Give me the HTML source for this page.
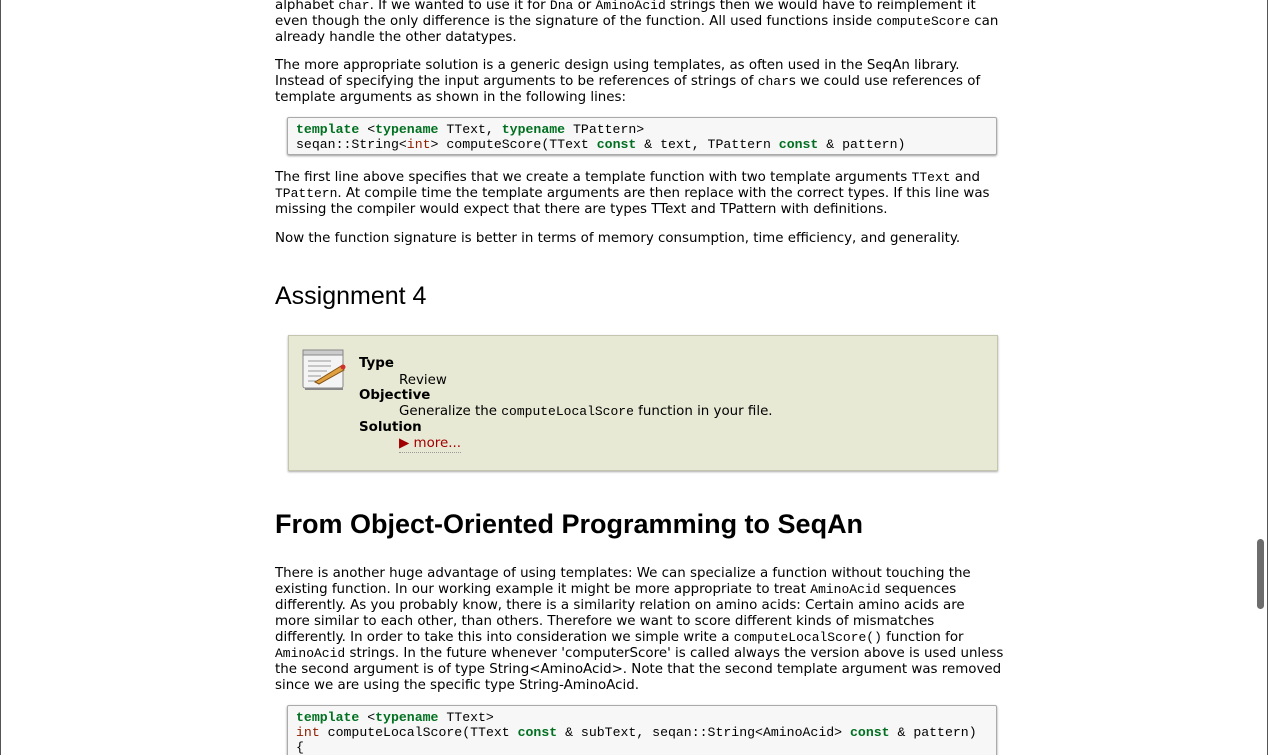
<!DOCTYPE html>
<html><head><meta charset="utf-8"><style>
html,body{margin:0;padding:0;background:#fff;width:1268px;height:755px;overflow:hidden;position:relative}
body{font-family:"DejaVu Sans","Liberation Sans",sans-serif;font-size:13.4px;color:#000}
.b{position:absolute;left:275px;width:737px;line-height:16px}
p{margin:0}
tt,.c{font-family:"Liberation Mono","DejaVu Sans Mono",monospace;font-size:13px;line-height:1}
.code{position:absolute;left:287px;width:710px;background:#f7f7f7;border:1px solid #aaa;border-radius:2px;box-shadow:0 1px 2px #999;font-family:"Liberation Mono",monospace;font-size:13.2px;line-height:15px;padding:4px 8px;box-sizing:border-box;white-space:pre;color:#000;overflow:hidden}
.k{color:#007020;font-weight:bold}.t{color:#902000}
h2{position:absolute;left:275px;margin:0;font-weight:normal;font-size:25px;font-family:"Liberation Sans",sans-serif}
h1{position:absolute;left:275px;margin:0;font-weight:bold;font-size:27px;font-family:"Liberation Sans",sans-serif}
.adm{position:absolute;left:288px;top:335px;width:710px;height:136px;background:#e8e9d4;border:1px solid #c5c6ae;box-shadow:0 1px 2px #aaa;box-sizing:border-box}
.adm .l{position:absolute;left:70px;font-weight:bold;font-size:13.4px;line-height:16px}
.adm .d{position:absolute;left:110px;line-height:16px}
</style></head><body>
<div style="position:absolute;left:0;top:0;width:1px;height:755px;background:#555"></div>
<div style="position:absolute;right:0;top:0;width:1px;height:755px;background:#555"></div>
<div style="position:absolute;left:1257px;top:539px;width:7px;height:70px;background:#6d6d6d;border-radius:4px"></div>

<div class="b" style="top:-2px">alphabet <tt>char</tt>. If we wanted to use it for <tt>Dna</tt> or <tt>AminoAcid</tt> strings then we would have to reimplement it even though the only difference is the signature of the function. All used functions inside <tt>computeScore</tt> can already handle the other datatypes.</div>
<div class="b" style="top:58px">The more appropriate solution is a generic design using templates, as often used in the SeqAn library. Instead of specifying the input arguments to be references of strings of <tt>char</tt>s we could use references of template arguments as shown in the following lines:</div>
<div class="code" style="top:117px;height:38px"><span class="k">template</span> &lt;<span class="k">typename</span> TText, <span class="k">typename</span> TPattern&gt;
seqan::String&lt;<span class="t">int</span>&gt; computeScore(TText <span class="k">const</span> &amp; text, TPattern <span class="k">const</span> &amp; pattern)</div>
<div class="b" style="top:170px">The first line above specifies that we create a template function with two template arguments <tt>TText</tt> and <tt>TPattern</tt>. At compile time the template arguments are then replace with the correct types. If this line was missing the compiler would expect that there are types TText and TPattern with definitions.</div>
<div class="b" style="top:231px">Now the function signature is better in terms of memory consumption, time efficiency, and generality.</div>
<h2 style="top:282px">Assignment 4</h2>
<div class="adm">
<svg style="position:absolute;left:12px;top:10px" width="46" height="46" viewBox="0 0 46 46"><rect x="2" y="4" width="40" height="38" rx="2" fill="#f4f4f4" stroke="#888"/><rect x="2" y="4" width="40" height="5" fill="#ccc" stroke="#888"/><g stroke="#999"><line x1="7" y1="15" x2="30" y2="15"/><line x1="7" y1="20" x2="30" y2="20"/><line x1="7" y1="25" x2="26" y2="25"/><line x1="7" y1="30" x2="20" y2="30"/><line x1="7" y1="35" x2="20" y2="35"/></g><path d="M14 36 L40 20 L43 24 L18 38 Z" fill="#e0a040" stroke="#805010"/><circle cx="42" cy="21" r="2.5" fill="#d03030"/><line x1="4" y1="43" x2="42" y2="43" stroke="#888" stroke-width="2"/></svg>
<div class="l" style="top:20px">Type</div><div class="d" style="top:37px">Review</div>
<div class="l" style="top:52px">Objective</div><div class="d" style="top:68px">Generalize the <tt>computeLocalScore</tt> function in your file.</div>
<div class="l" style="top:84px">Solution</div><div class="d" style="top:100px;color:#a00000;border-bottom:1px dotted #999">&#9654; more...</div>
</div>
<h1 style="top:509px">From Object-Oriented Programming to SeqAn</h1>
<div class="b" style="top:566px;white-space:nowrap">There is another huge advantage of using templates: We can specialize a function without touching the<br>existing function. In our working example it might be more appropriate to treat <tt>AminoAcid</tt> sequences<br>differently. As you probably know, there is a similarity relation on amino acids: Certain amino acids are<br>more similar to each other, than others. Therefore we want to score different kinds of mismatches<br>differently. In order to take this into consideration we simple write a <tt>computeLocalScore()</tt> function for<br><tt>AminoAcid</tt> strings. In the future whenever 'computerScore' is called always the version above is used unless<br>the second argument is of type String&lt;AminoAcid&gt;. Note that the second template argument was removed<br>since we are using the specific type String-AminoAcid.</div>
<div class="code" style="top:705px;height:60px"><span class="k">template</span> &lt;<span class="k">typename</span> TText&gt;
<span class="t">int</span> computeLocalScore(TText <span class="k">const</span> &amp; subText, seqan::String&lt;AminoAcid&gt; <span class="k">const</span> &amp; pattern)
{</div>
</body></html>
